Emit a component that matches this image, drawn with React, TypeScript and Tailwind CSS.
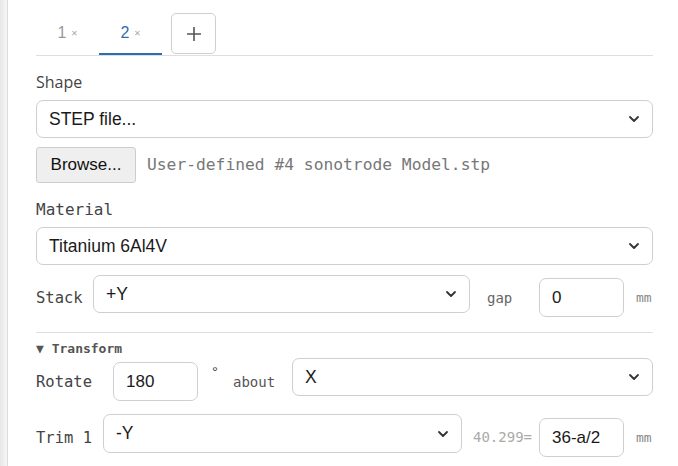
const mono = "font-['DejaVu_Sans_Mono',monospace]"
const sans = "font-['Liberation_Sans',Arial,sans-serif]"

function Chevron() {
  return (
    <svg width="12" height="8" viewBox="0 0 12 8" className="shrink-0">
      <path d="M2 2l4 4 4-4" fill="none" stroke="#333" strokeWidth="1.8" strokeLinecap="round" strokeLinejoin="round" />
    </svg>
  )
}

function Select({ value, className = '' }: { value: string; className?: string }) {
  return (
    <div
      className={`flex items-center justify-between h-[38px] border border-[#cfcfcf] rounded-[7px] pl-[12px] pr-[12px] bg-white text-[17.5px] text-[#1a1a1a] ${sans} ${className}`}
    >
      <span>{value}</span>
      <Chevron />
    </div>
  )
}

function NumInput({ value, className = '' }: { value: string; className?: string }) {
  return (
    <div
      className={`flex items-center shrink-0 h-[39px] w-[85px] border border-[#cfcfcf] rounded-[7px] px-[12px] bg-white text-[17px] text-[#1a1a1a] ${sans} ${className}`}
    >
      {value}
    </div>
  )
}

function Tab({ n, active }: { n: string; active?: boolean }) {
  return (
    <div
      className={`flex items-center justify-center w-[63px] h-[42px] border-b-2 ${
        active ? 'border-[#2f6db0] text-[#2f6db0]' : 'border-transparent text-[#999]'
      }`}
    >
      <span className={`text-[16px] ${sans}`}>{n}</span>
      <span className="text-[11px] text-[#aaa] ml-[5px]">×</span>
    </div>
  )
}

export default function App() {
  return (
    <div className="flex w-[678px] h-[466px] overflow-hidden bg-white">
      <div className="w-[8px] shrink-0 bg-gradient-to-r from-[#e6e6e6] to-[#f6f6f6] border-r border-[#dcdcdc]" />
      <div className="flex flex-col pl-[28px] pr-[25px] w-[670px]">
        <div className="flex items-end border-b border-[#dedede] pt-[13px]">
          <Tab n="1" />
          <Tab n="2" active />
          <div className="ml-[9px] mb-[1px] w-[45px] h-[41px] flex items-center justify-center border border-[#cfcfcf] rounded-[5px]">
            <svg width="16" height="16" viewBox="0 0 16 16">
              <path d="M8 1v14M1 8h14" stroke="#555" strokeWidth="1.6" />
            </svg>
          </div>
        </div>

        <div className="mt-[16px] text-[16px] text-[#444] font-['Open_Sans',sans-serif] leading-[20px]">Shape</div>
        <Select value="STEP file..." className="mt-[8px]" />

        <div className="flex items-center mt-[9px] gap-[11px]">
          <div className={`h-[36px] w-[100px] flex items-center justify-center bg-[#efefef] border border-[#cdcdcd] rounded-[3px] text-[17px] text-[#111] ${sans}`}>
            Browse...
          </div>
          <span className={`text-[16.3px] text-[#777] ${mono}`}>User-defined #4 sonotrode Model.stp</span>
        </div>

        <div className={`mt-[17px] text-[16px] text-[#444] ${mono} leading-[20px]`}>Material</div>
        <Select value="Titanium 6Al4V" className="mt-[7px]" />

        <div className="flex items-start mt-[10px]">
          <span className={`w-[57px] pt-[13px] text-[15.5px] leading-[20px] text-[#444] ${mono}`}>Stack</span>
          <Select value="+Y" className="w-[377px]" />
          <span className={`ml-[17px] w-[52px] pt-[13px] text-[14px] leading-[20px] text-[#666] ${mono}`}>gap</span>
          <NumInput value="0" className="mt-[3px]" />
          <span className={`ml-[12px] pt-[13px] text-[13px] leading-[20px] text-[#888] ${mono}`}>mm</span>
        </div>

        <div className="mt-[15px] border-t border-[#dedede]" />
        <div className={`mt-[8px] text-[13px] font-bold text-[#555] ${mono} leading-[16px]`}>▼ Transform</div>

        <div className="flex items-start mt-[1px]">
          <span className={`w-[77px] pt-[14px] text-[15.5px] leading-[20px] text-[#444] ${mono}`}>Rotate</span>
          <NumInput value="180" className="mt-[4px]" />
          <span className={`ml-[14px] w-[21px] pt-[4px] text-[15px] leading-[20px] text-[#444] ${sans}`}>°</span>
          <span className={`w-[59px] pt-[14px] text-[14px] leading-[20px] text-[#555] ${mono}`}>about</span>
          <Select value="X" className="flex-1" />
        </div>

        <div className="flex items-start mt-[13px]">
          <span className={`w-[67px] pt-[14px] text-[15.5px] leading-[20px] text-[#444] ${mono}`}>Trim 1</span>
          <Select value="-Y" className="w-[359px] h-[39px]" />
          <span className={`ml-[11px] w-[66px] pt-[13px] text-[14px] leading-[20px] text-[#aaa] ${mono}`}>40.299=</span>
          <NumInput value="36-a/2" className="mt-[4px]" />
          <span className={`ml-[12px] pt-[14px] text-[13px] leading-[20px] text-[#888] ${mono}`}>mm</span>
        </div>
      </div>
    </div>
  )
}
